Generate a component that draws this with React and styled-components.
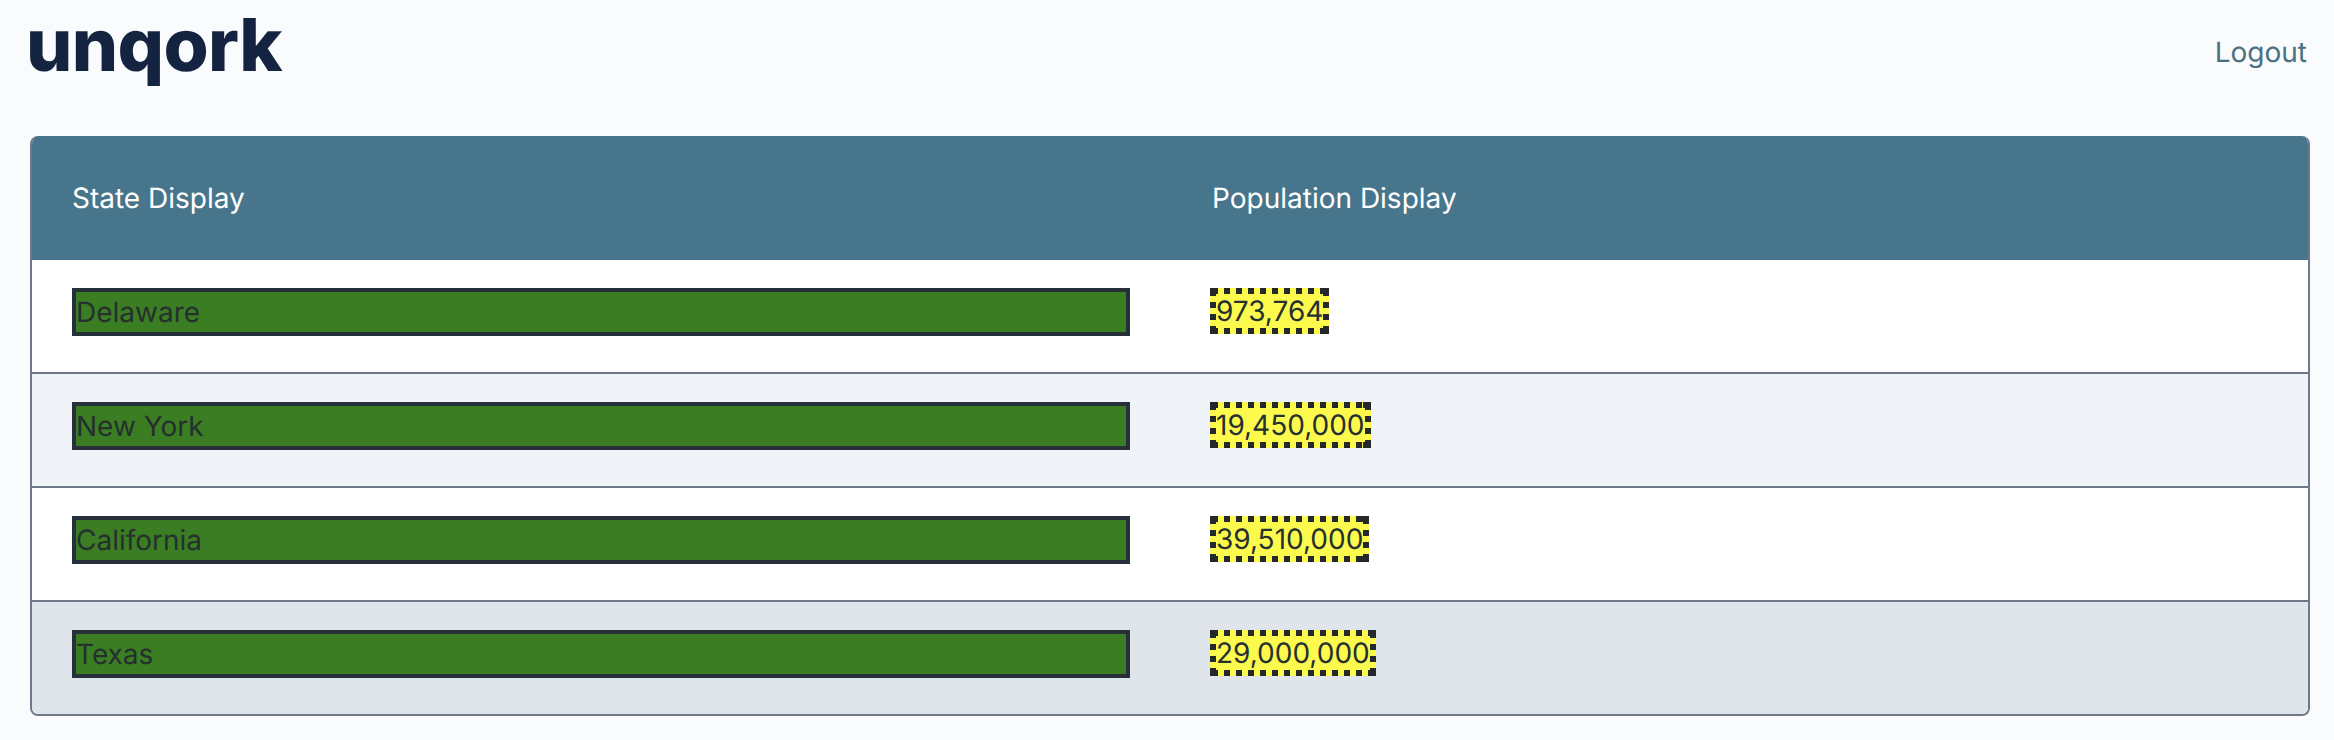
import React from "react";
import styled, { createGlobalStyle } from "styled-components";

const Global = createGlobalStyle`
  html, body { margin: 0; padding: 0; background: #fafbfd; }
  body {
    font-family: "Inter", "Liberation Sans", sans-serif;
    text-rendering: geometricPrecision;
  }
`;

const Page = styled.div`
  width: 2334px;
  height: 740px;
  padding: 0 24px 0 30px;
  box-sizing: border-box;
  overflow: hidden;
`;

const TopBar = styled.header`
  display: flex;
  justify-content: space-between;
  align-items: flex-start;
  height: 136px;
`;

const Logo = styled.div`
  font-size: 73px;
  font-weight: 800;
  line-height: 87px;
  margin: 1px 0 0 -4px;
  letter-spacing: -0.6px;
  color: #14233f;
`;

const Logout = styled.a`
  font-size: 28px;
  line-height: 34px;
  margin-top: 35px;
  margin-right: 3px;
  color: #4a7183;
`;

const Card = styled.section`
  border-radius: 8px;
  border: 2px solid #6f7888;
  border-top: 0;
  overflow: hidden;
`;

const HeaderRow = styled.div`
  display: grid;
  grid-template-columns: 1fr 1fr;
  height: 124px;
  margin: 0 -2px;
  background: #47758b;
  color: #ffffff;
  font-size: 28px;
  align-items: center;
`;

const HeaderCell = styled.div`
  padding: 0 42px;
`;

const Row = styled.div`
  display: grid;
  grid-template-columns: 1fr 1fr;
  height: ${(p) => (p.$last ? "112px" : "114px")};
  box-sizing: border-box;
  background: ${(p) => p.$bg};
  border-bottom: ${(p) => (p.$last ? "0" : "2px solid #6f7888")};
`;

const Cell = styled.div`
  padding: 28px 40px 0;
  display: flex;
  align-items: flex-start;
`;

const StateBox = styled.div`
  flex: 1;
  height: 48px;
  box-sizing: border-box;
  border: 4px solid #272f3b;
  background: #3a7d23;
  color: #25302f;
  font-size: 28px;
  line-height: 40px;
`;

const ink = "#24282a";
const PopulationBox = styled.div`
  height: 46px;
  box-sizing: border-box;
  padding: 6px;
  font-size: 28px;
  line-height: 34px;
  color: #25302f;
  background:
    linear-gradient(${ink}, ${ink}) 0 0 / 8px 6px no-repeat,
    linear-gradient(${ink}, ${ink}) 100% 0 / 8px 6px no-repeat,
    linear-gradient(${ink}, ${ink}) 0 100% / 8px 6px no-repeat,
    linear-gradient(${ink}, ${ink}) 100% 100% / 8px 6px no-repeat,
    linear-gradient(90deg, ${ink} 6px, transparent 6px) 2px 0 / 12px 6px repeat-x,
    linear-gradient(90deg, ${ink} 6px, transparent 6px) 2px 100% / 12px 6px repeat-x,
    linear-gradient(${ink} 6px, transparent 6px) 0 2px / 6px 12px repeat-y,
    linear-gradient(${ink} 6px, transparent 6px) 100% 2px / 6px 12px repeat-y,
    #fdfa4e;
`;

const rows = [
  { state: "Delaware", pop: "973,764", bg: "#ffffff" },
  { state: "New York", pop: "19,450,000", bg: "#f0f3f8" },
  { state: "California", pop: "39,510,000", bg: "#ffffff" },
  { state: "Texas", pop: "29,000,000", bg: "#e0e4eb", last: true },
];

export default function App() {
  return (
    <Page>
      <Global />
      <TopBar>
        <Logo>unqork</Logo>
        <Logout>Logout</Logout>
      </TopBar>
      <Card>
        <HeaderRow>
          <HeaderCell>State Display</HeaderCell>
          <HeaderCell>Population Display</HeaderCell>
        </HeaderRow>
        {rows.map((r) => (
          <Row key={r.state} $bg={r.bg} $last={r.last}>
            <Cell><StateBox>{r.state}</StateBox></Cell>
            <Cell><PopulationBox>{r.pop}</PopulationBox></Cell>
          </Row>
        ))}
      </Card>
    </Page>
  );
}
